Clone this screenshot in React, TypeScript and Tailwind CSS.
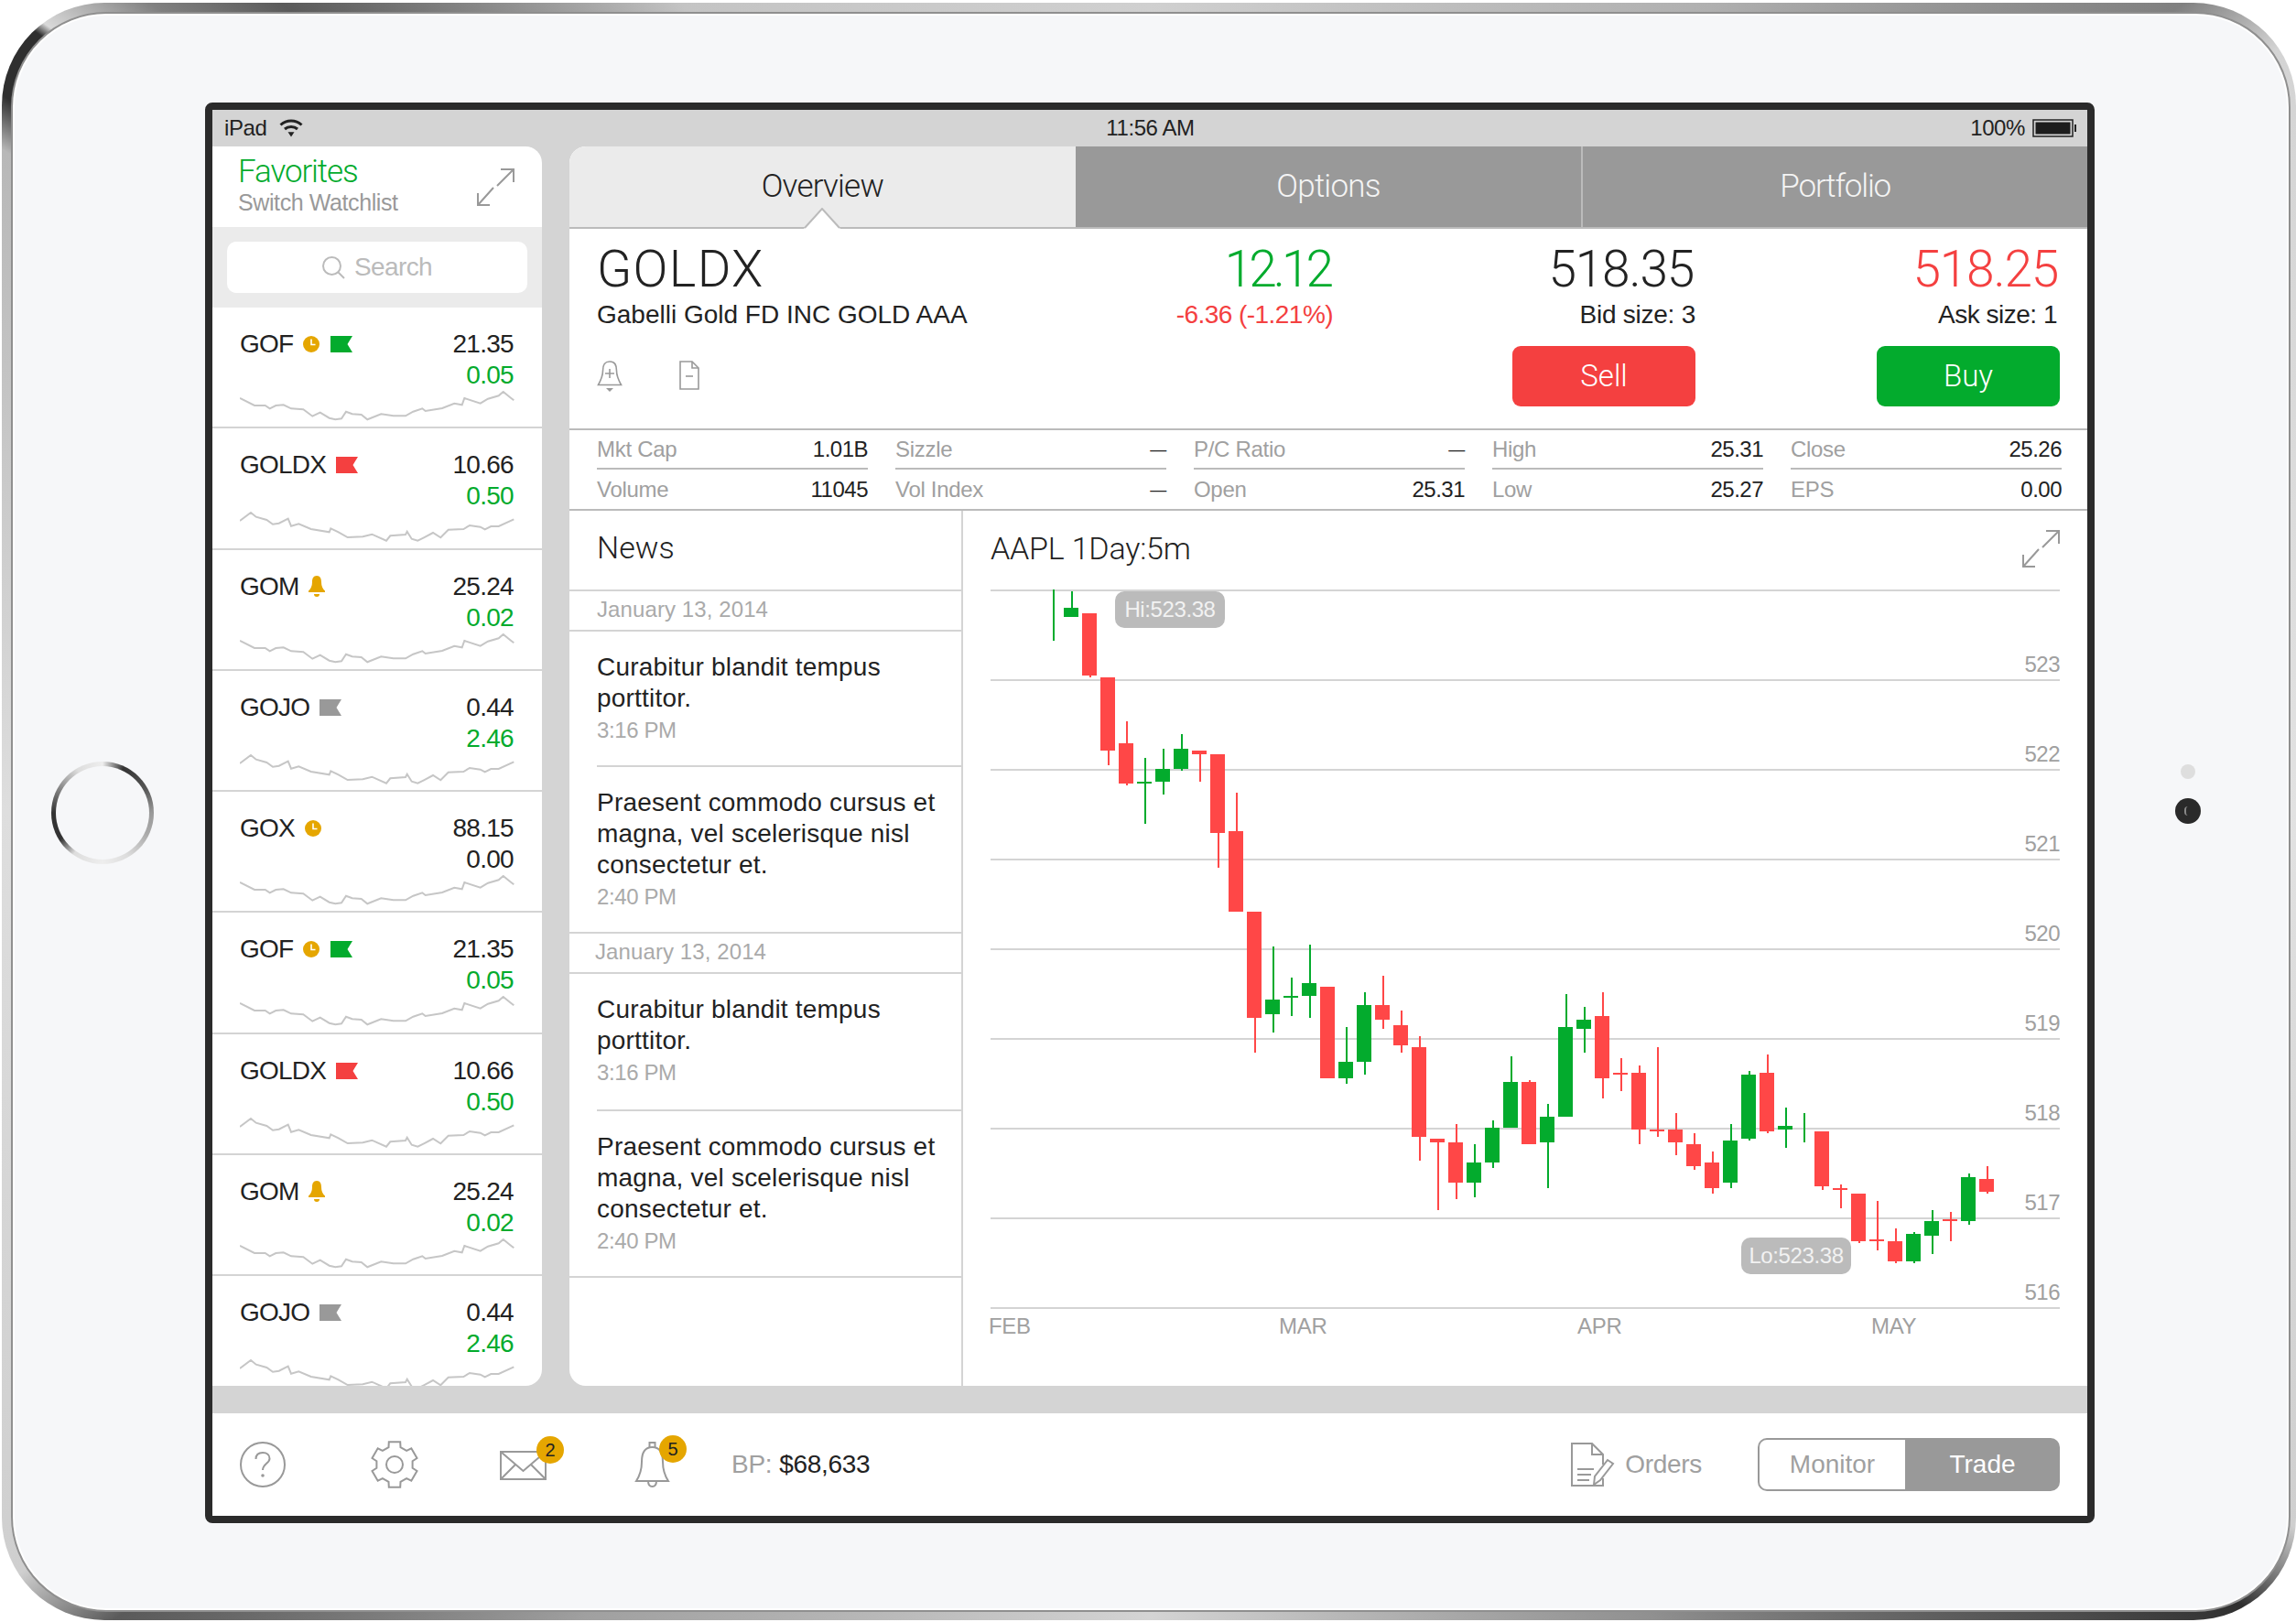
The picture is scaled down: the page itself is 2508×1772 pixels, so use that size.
import React from "react";

const GREEN = "#03ab2d";
const RED = "#f44040";
const AMBER = "#e5a600";

const sparkA: [number, number][] = [[97,713],[145,737],[180,737],[195,747],[215,737],[240,735],[265,747],[305,750],[335,772],[360,760],[390,778],[410,783],[430,780],[445,757],[465,765],[495,767],[515,783],[560,765],[600,771],[640,771],[665,757],[695,747],[705,755],[760,746],[800,730],[825,735],[833,713],[885,730],[910,715],[945,705],[960,692],[985,712],[995,720]];
const sparkB: [number, number][] = [[97,323],[133,296],[150,310],[185,320],[205,334],[225,331],[255,316],[265,340],[290,333],[330,350],[390,360],[395,348],[420,360],[450,377],[500,375],[530,367],[577,388],[590,372],[640,368],[645,358],[660,382],[680,388],[700,378],[730,362],[755,378],[780,352],[830,350],[850,338],[885,343],[900,351],[920,341],[945,341],[995,318]];

const toPts = (d: [number, number][], y0: number) =>
  d.map(([x, y]) => `${((x - 97) / 3).toFixed(1)},${((y - y0) / 3 + 1).toFixed(1)}`).join(" ");
const ptsA = toPts(sparkA, 692);
const ptsB = toPts(sparkB, 296);

type Row = { s: string; v: string; c: string; icons: string[]; spark: string; flat?: boolean };
const G: Row = { s: "GOF", v: "21.35", c: "0.05", icons: ["clock", "green"], spark: ptsA };
const L: Row = { s: "GOLDX", v: "10.66", c: "0.50", icons: ["red"], spark: ptsB };
const M: Row = { s: "GOM", v: "25.24", c: "0.02", icons: ["bell"], spark: ptsA };
const J: Row = { s: "GOJO", v: "0.44", c: "2.46", icons: ["gray"], spark: ptsB };
const X: Row = { s: "GOX", v: "88.15", c: "0.00", icons: ["clock"], spark: ptsA, flat: true };
const rows: Row[] = [G, L, M, J, X, G, L, M, J];

// [index, color (g/r), wickTop, wickBottom, bodyTop, bodyBottom]
const candles: [number, string, number, number, number, number][] = [
  [0,"g",643,699,0,0],[1,"g",645,663,663,673],[2,"r",669,739,669,737],[3,"r",739,835,739,819],
  [4,"r",787,857,811,855],[5,"g",827,899,853,855],[6,"g",817,867,839,853],[7,"g",801,841,817,839],
  [8,"r",819,853,819,823],[9,"r",823,947,823,909],[10,"r",865,995,907,995],[11,"r",995,1149,995,1111],
  [12,"g",1033,1127,1091,1107],[13,"g",1067,1109,1087,1089],[14,"g",1031,1111,1073,1087],[15,"r",1077,1177,1077,1177],
  [16,"g",1121,1183,1159,1177],[17,"g",1083,1173,1097,1159],[18,"r",1065,1123,1097,1113],[19,"r",1103,1149,1119,1141],
  [20,"r",1131,1267,1143,1241],[21,"r",1243,1321,1243,1247],[22,"r",1227,1309,1247,1291],[23,"g",1249,1307,1269,1291],
  [24,"g",1223,1275,1231,1269],[25,"g",1153,1231,1181,1231],[26,"r",1179,1249,1181,1249],[27,"g",1205,1297,1219,1247],
  [28,"g",1085,1219,1121,1219],[29,"g",1099,1149,1113,1123],[30,"r",1083,1199,1109,1177],[31,"r",1155,1191,1171,1173],
  [32,"r",1163,1249,1171,1233],[33,"r",1143,1241,1233,1235],[34,"r",1215,1261,1233,1247],[35,"r",1237,1277,1249,1273],
  [36,"r",1257,1303,1269,1297],[37,"g",1227,1297,1245,1291],[38,"g",1169,1245,1173,1243],[39,"r",1151,1237,1171,1235],
  [40,"g",1209,1253,1229,1233],[41,"g",1215,1247,0,0],[42,"r",1235,1299,1235,1295],[43,"r",1293,1319,1297,1299],
  [44,"r",1303,1357,1303,1355],[45,"r",1311,1365,1353,1355],[46,"r",1341,1379,1355,1377],[47,"g",1345,1379,1347,1377],
  [48,"g",1321,1369,1333,1349],[49,"r",1323,1355,1331,1333],[50,"g",1281,1337,1285,1333],[51,"r",1273,1303,1287,1301],
];

const gearPoints = () => {
  const cx = 26, cy = 26, ro = 25.5, ri = 20;
  const pts: string[] = [];
  const p = (r: number, a: number) => {
    const t = (a * Math.PI) / 180;
    return `${(cx + r * Math.cos(t)).toFixed(1)},${(cy + r * Math.sin(t)).toFixed(1)}`;
  };
  for (let i = 0; i < 6; i++) {
    const a = -90 + i * 60;
    pts.push(p(ri, a - 19), p(ro, a - 14), p(ro, a + 14), p(ri, a + 19));
  }
  return pts.join(" ");
};

function Flag({ fill }: { fill: string }) {
  return (
    <svg width="24" height="18" viewBox="0 0 24 18" className="shrink-0">
      <polygon points="0,0 24,0 18.5,9 24,18 0,18" fill={fill} />
    </svg>
  );
}
function Clock() {
  return (
    <svg width="18" height="18" viewBox="0 0 18 18" className="shrink-0">
      <circle cx="9" cy="9" r="9" fill={AMBER} />
      <path d="M9 3.5V9.5H13.5" fill="none" stroke="#fff" strokeWidth="1.6" />
    </svg>
  );
}
function MiniBell() {
  return (
    <svg width="18" height="23" viewBox="0 0 18 23" className="shrink-0">
      <path d="M9 0C5.2 0 4 3 4 7C4 11 2.5 14.5 0 16.5V18H18V16.5C15.5 14.5 14 11 14 7C14 3 12.8 0 9 0Z" fill={AMBER} />
      <path d="M6 20H12C12 22 11 23 9 23C7 23 6 22 6 20Z" fill={AMBER} />
    </svg>
  );
}
function Expand() {
  return (
    <svg width="41" height="41" viewBox="0 0 41 41" fill="none" stroke="#999" strokeWidth="2">
      <path d="M26 1H40V15M40 1L22 19" />
      <path d="M1 27V40H14M1 40L18 21" />
    </svg>
  );
}
function RowIcon({ k }: { k: string }) {
  if (k === "clock") return <Clock />;
  if (k === "bell") return <MiniBell />;
  if (k === "green") return <Flag fill={GREEN} />;
  if (k === "red") return <Flag fill={RED} />;
  return <Flag fill="#999" />;
}

function WatchRow({ r, last }: { r: Row; last: boolean }) {
  return (
    <div className={`h-[132.25px] shrink-0 pl-[30px] pr-[31px] pt-[23px] ${last ? "" : "border-b-2 border-[#d4d4d4]"}`}>
      <div className="flex items-center justify-between h-[34px]">
        <div className="flex items-center">
          <span className="text-[28px] leading-[34px] tracking-[-0.8px] text-[#222]">{r.s}</span>
          <span className="flex items-center gap-[12px] ml-[11px]">
            {r.icons.map((k, i) => (
              <RowIcon key={i} k={k} />
            ))}
          </span>
        </div>
        <span className="text-[28px] leading-[34px] tracking-[-0.7px] text-[#222]">{r.v}</span>
      </div>
      <div className={`text-right text-[28px] leading-[34px] tracking-[-0.7px] ${r.flat ? "text-[#222]" : "text-[#03ab2d]"}`}>{r.c}</div>
      <svg width="300" height="33" viewBox="0 0 300 33" fill="none" className="block">
        <polyline points={r.spark} stroke="#c6c6c6" strokeWidth="2" />
      </svg>
    </div>
  );
}

function Sidebar() {
  return (
    <aside className="w-[360px] shrink-0 bg-white rounded-r-[18px] flex flex-col overflow-hidden">
      <div className="h-[88px] shrink-0 pl-[28px] pr-[30px] flex items-center justify-between">
        <div className="-mt-[2px]">
          <div className="font-['Roboto',sans-serif] font-light text-[35px] leading-[38px] tracking-[-1.1px] text-[#03ab2d] -mt-[2px]">Favorites</div>
          <div className="text-[25px] leading-[28px] tracking-[-0.4px] text-[#999]">Switch Watchlist</div>
        </div>
        <Expand />
      </div>
      <div className="h-[88px] shrink-0 bg-[#ebebeb] px-[16px] flex items-center">
        <div className="w-full h-[56px] bg-white rounded-[10px] flex items-center justify-center gap-[10px]">
          <svg width="25" height="25" viewBox="0 0 25 25" fill="none" stroke="#bbb" strokeWidth="2">
            <circle cx="10.5" cy="10.5" r="9.5" />
            <path d="M17.5 17.5L24 24" />
          </svg>
          <span className="text-[28px] leading-[34px] tracking-[-0.6px] text-[#bbb]">Search</span>
        </div>
      </div>
      {rows.map((r, i) => (
        <WatchRow key={i} r={r} last={i === rows.length - 1} />
      ))}
    </aside>
  );
}

function Tabs() {
  return (
    <div className="grid grid-cols-3 h-[90px] shrink-0 border-b-2 border-[#bbb] font-['Roboto',sans-serif] font-light text-[35px] tracking-[-0.8px]">
      <div className="relative bg-[#ebebeb] text-[#222] flex items-center justify-center rounded-tl-[18px]">
        Overview
        <svg width="40" height="23" viewBox="0 0 40 23" className="absolute left-1/2 -translate-x-1/2 -bottom-[2px]">
          <polygon points="0,23 20,1 40,23" fill="#fff" />
          <path d="M1 22L20 1L39 22" fill="none" stroke="#bbb" strokeWidth="2" />
        </svg>
      </div>
      <div className="bg-[#999] text-[#f4f4f4] flex items-center justify-center">Options</div>
      <div className="bg-[#999] text-[#f4f4f4] flex items-center justify-center border-l-2 border-[#bbb] tracking-[-1.2px]">Portfolio</div>
    </div>
  );
}

function QuoteHeader() {
  return (
    <div className="h-[218px] shrink-0 pl-[30px] flex">
      <div className="w-[600px] pt-[14px]">
        <div className="font-['Roboto',sans-serif] font-light text-[56px] leading-[60px] tracking-[1.3px] text-[#222]">GOLDX</div>
        <div className="mt-[2px] text-[28px] leading-[36px] text-[#222] whitespace-nowrap">Gabelli Gold FD INC GOLD AAA</div>
        <div className="mt-[32px] flex gap-[62px]">
          <svg width="28" height="34" viewBox="0 0 28 34" fill="none" stroke="#999" strokeWidth="1.6">
            <path d="M14 1C8 1 6.5 5 6.5 11C6.5 17 4 22 1.5 26.5H26.5C24 22 21.5 17 21.5 11C21.5 5 20 1 14 1Z" />
            <path d="M14 9V19M9 14H19" />
            <path d="M10 30H18L14 34Z" fill="#999" stroke="none" />
          </svg>
          <svg width="22" height="32" viewBox="0 0 22 32" fill="none" stroke="#999" strokeWidth="1.6">
            <path d="M1 1H14L21 8V31H1Z" />
            <path d="M14 1V8H21" />
            <path d="M7 17H15" />
          </svg>
        </div>
      </div>
      <div className="w-[204px] pt-[14px] text-right">
        <div className="font-['Roboto',sans-serif] font-light text-[55px] leading-[60px] tracking-[-4px] text-[#03ab2d] pr-[3px]">12.12</div>
        <div className="mt-[2px] text-[28px] leading-[36px] tracking-[-0.55px] text-[#f44040] whitespace-nowrap">-6.36 (-1.21%)</div>
      </div>
      <div className="w-[396px] pt-[14px] flex flex-col items-end">
        <div className="font-['Roboto',sans-serif] font-light text-[55px] leading-[60px] tracking-[-1.2px] text-[#222] pr-[2px]">518.35</div>
        <div className="mt-[2px] text-[28px] leading-[36px] tracking-[-0.25px] text-[#222]">Bid size: 3</div>
        <div className="mt-[16px] w-[200px] h-[66px] rounded-[9px] bg-[#f44040] text-white flex items-center justify-center font-['Roboto',sans-serif] font-light text-[33px]">Sell</div>
      </div>
      <div className="w-[398px] pt-[14px] flex flex-col items-end">
        <div className="font-['Roboto',sans-serif] font-light text-[55px] leading-[60px] tracking-[-1.2px] text-[#f44040] pr-[2px]">518.25</div>
        <div className="mt-[2px] text-[28px] leading-[36px] tracking-[-0.5px] text-[#222] pr-[3px]">Ask size: 1</div>
        <div className="mt-[16px] w-[200px] h-[66px] rounded-[9px] bg-[#03ab2d] text-white flex items-center justify-center font-['Roboto',sans-serif] font-light text-[33px]">Buy</div>
      </div>
    </div>
  );
}

const stats = [
  [["Mkt Cap", "1.01B"], ["Volume", "11045"]],
  [["Sizzle", "—"], ["Vol Index", "—"]],
  [["P/C Ratio", "—"], ["Open", "25.31"]],
  [["High", "25.31"], ["Low", "25.27"]],
  [["Close", "25.26"], ["EPS", "0.00"]],
];

function Stats() {
  return (
    <div className="shrink-0 border-y-2 border-[#bbb] pl-[30px] pr-[28px] grid grid-cols-5 gap-x-[30px] h-[90px]">
      {stats.map((col, i) => (
        <div key={i} className="text-[24px] tracking-[-0.3px]">
          {col.map(([a, b], j) => (
            <div key={j} className={`h-[43px] flex items-center justify-between ${j === 0 ? "border-b-2 border-[#bbb]" : ""}`}>
              <span className="text-[#a0a0a0]">{a}</span>
              <span className={b === "—" ? "text-[#222] text-[18px] leading-none" : "text-[#222] tracking-[-0.5px]"}>{b}</span>
            </div>
          ))}
        </div>
      ))}
    </div>
  );
}

function NewsDate({ pad }: { pad: string }) {
  return (
    <div className={`h-[42px] flex items-center text-[24px] tracking-[0.1px] text-[#aaa] ${pad}`}>January 13, 2014</div>
  );
}
function NewsItem({ lines, time, h }: { lines: string[]; time: string; h: string }) {
  return (
    <div className={`${h} pt-[22px] text-[28px] leading-[34px] tracking-[0.2px] text-[#222]`}>
      {lines.map((l, i) => (
        <div key={i}>{l}</div>
      ))}
      <div className="text-[24px] leading-[36px] tracking-[-0.4px] text-[#aaa]">{time}</div>
    </div>
  );
}
function News() {
  const a = ["Curabitur blandit tempus", "porttitor."];
  const b = ["Praesent commodo cursus et", "magna, vel scelerisque nisl", "consectetur et."];
  return (
    <div className="w-[430px] shrink-0 border-r-2 border-[#d4d4d4] flex flex-col">
      <div className="h-[88px] shrink-0 border-b-2 border-[#d4d4d4] pl-[30px] pb-[6px] flex items-center font-['Roboto',sans-serif] font-light text-[34px] text-[#222]">News</div>
      <NewsDate pad="pl-[30px] pb-[2px]" />
      <div className="border-t-2 border-[#d4d4d4]">
        <div className="ml-[30px] border-b-2 border-[#d4d4d4]">
          <NewsItem lines={a} time="3:16 PM" h="h-[146px]" />
        </div>
        <div className="ml-[30px]">
          <NewsItem lines={b} time="2:40 PM" h="h-[180px]" />
        </div>
      </div>
      <div className="border-y-2 border-[#d4d4d4]">
        <NewsDate pad="pl-[28px] pb-[2px]" />
      </div>
      <div className="border-b-2 border-[#d4d4d4]">
        <div className="ml-[30px] border-b-2 border-[#d4d4d4]">
          <NewsItem lines={a} time="3:16 PM" h="h-[148px]" />
        </div>
        <div className="ml-[30px]">
          <NewsItem lines={b} time="2:40 PM" h="h-[180px]" />
        </div>
      </div>
    </div>
  );
}

const grid = [644, 742, 840, 938, 1036, 1134, 1232, 1330, 1428];
const yLabels = ["", "523", "522", "521", "520", "519", "518", "517", "516"];
const xLabels: [string, number][] = [["FEB", 1080], ["MAR", 1397], ["APR", 1723], ["MAY", 2044]];

function Chart() {
  return (
    <div className="flex-1 min-w-0 flex flex-col">
      <div className="h-[84px] shrink-0 pl-[30px] pr-[30px] pb-[2px] flex items-center justify-between">
        <span className="font-['Roboto',sans-serif] font-light text-[34px] tracking-[-0.2px] text-[#222]">AAPL 1Day:5m</span>
        <Expand />
      </div>
      <svg width="1228" height="872" viewBox="1052 641 1228 872" className="block text-[24px]">
        {grid.map((y) => (
          <rect key={y} x="1082" y={y - 1} width="1168" height="2" fill="#d4d4d4" />
        ))}
        {grid.map((y, i) =>
          yLabels[i] ? (
            <text key={y} x="2250" y={y - 9} textAnchor="end" fill="#a0a0a0" letterSpacing="-0.5">
              {yLabels[i]}
            </text>
          ) : null
        )}
        {xLabels.map(([t, x]) => (
          <text key={t} x={x} y="1456" fill="#a0a0a0" letterSpacing="-0.3">
            {t}
          </text>
        ))}
        {candles.map(([i, c, wt, wb, bt, bb]) => {
          const fill = c === "g" ? "#03ab2d" : "#ff4747";
          const left = 1142 + 20 * i;
          return (
            <g key={i} fill={fill}>
              <rect x={left + 8} y={wt} width="2" height={wb - wt} />
              {bb > bt ? <rect x={left} y={bt} width="16" height={bb - bt} /> : null}
            </g>
          );
        })}
        <rect x="1218" y="645" width="120" height="40" rx="10" fill="#bbb" />
        <text x="1278" y="673" textAnchor="middle" fill="#f2f2f2" letterSpacing="-0.4">Hi:523.38</text>
        <rect x="1902" y="1351" width="120" height="40" rx="10" fill="#bbb" />
        <text x="1962" y="1379" textAnchor="middle" fill="#f2f2f2" letterSpacing="-0.4">Lo:523.38</text>
      </svg>
    </div>
  );
}

function Badge({ n }: { n: string }) {
  return (
    <span className="absolute -top-[16px] -right-[19px] w-[30px] h-[30px] rounded-full bg-[#e5a600] text-[#222] text-[20px] leading-[30px] text-center">{n}</span>
  );
}

function BottomBar() {
  return (
    <div className="h-[112px] shrink-0 bg-white flex items-center pl-[30px] pr-[30px] text-[28px] tracking-[-0.3px]">
      <svg width="50" height="50" viewBox="0 0 50 50" fill="none" stroke="#999" strokeWidth="2" className="shrink-0">
        <circle cx="25" cy="25" r="24" />
        <path d="M17.5 19C17.5 14.5 20.5 12 25 12C29.5 12 32.5 14.8 32.5 18.5C32.5 23.5 25 24.5 25 31" />
        <circle cx="25" cy="37" r="1.8" fill="#999" stroke="none" />
      </svg>
      <svg width="52" height="52" viewBox="0 0 52 52" fill="none" stroke="#999" strokeWidth="2" className="shrink-0 ml-[93px]">
        <polygon points={gearPoints()} />
        <circle cx="26" cy="26" r="9" />
      </svg>
      <div className="relative shrink-0 ml-[89px] mt-[2px] w-[51px] h-[32px]">
        <svg width="51" height="32" viewBox="0 0 51 32" fill="none" stroke="#999" strokeWidth="2" className="block">
          <rect x="1" y="1" width="49" height="30" />
          <path d="M1 1L25.5 22L50 1" />
          <path d="M1 31L17 15M50 31L34 15" />
        </svg>
        <Badge n="2" />
      </div>
      <div className="relative shrink-0 ml-[96px] w-[39px] h-[50px]">
        <svg width="39" height="50" viewBox="0 0 39 50" fill="none" stroke="#999" strokeWidth="2" className="block">
          <path d="M16.5 7V1H22.5V7" />
          <path d="M19.5 6C11 6 8 13 8 22C8 31 6.5 36 2 43H37C32.5 36 31 31 31 22C31 13 28 6 19.5 6Z" />
          <path d="M15 43C15 47 17 49 19.5 49C22 49 24 47 24 43" />
        </svg>
        <span className="absolute -top-[7px] -right-[18px] w-[30px] h-[30px] rounded-full bg-[#e5a600] text-[#222] text-[20px] leading-[30px] text-center">5</span>
      </div>
      <span className="ml-[67px] text-[#a0a0a0]">BP:</span>
      <span className="ml-[8px] text-[#222]">$68,633</span>
      <div className="ml-auto flex items-center">
        <svg width="48" height="48" viewBox="0 0 48 48" fill="none" stroke="#999" strokeWidth="2" className="shrink-0">
          <path d="M35 24V13L23 1H1V47H35V39" />
          <path d="M23 1V13H35" />
          <path d="M7 29H25M7 35H22M7 41H20" />
          <path d="M25 46L26 37L40 19L46 23L32 41Z" />
        </svg>
        <span className="ml-[11px] text-[#a0a0a0]">Orders</span>
        <div className="ml-[61px] w-[330px] h-[58px] flex tracking-normal">
          <div className="w-[161px] border-2 border-r-0 border-[#999] rounded-l-[10px] bg-white text-[#a0a0a0] flex items-center justify-center">Monitor</div>
          <div className="flex-1 bg-[#999] rounded-r-[10px] text-white flex items-center justify-center">Trade</div>
        </div>
      </div>
    </div>
  );
}

function Screen() {
  return (
    <div className="w-[2064px] h-[1552px] shrink-0 border-[8px] border-[#2b2b2b] rounded-[8px] bg-[#d4d4d4] flex flex-col overflow-hidden">
      <div className="h-[40px] shrink-0 pl-[13px] pr-[12px] flex items-center justify-between text-[24px] tracking-[-0.4px] text-[#222]">
        <div className="w-[400px] flex items-center gap-[14px]">
          <span>iPad</span>
          <svg width="26" height="20" viewBox="0 0 26 20" fill="none" stroke="#222" strokeWidth="3">
            <path d="M1.5 6.5C8 0.5 18 0.5 24.5 6.5" />
            <path d="M6 11C10 7.5 16 7.5 20 11" />
            <path d="M9.5 14.2H16.5L13 19.5Z" fill="#222" stroke="none" />
          </svg>
        </div>
        <span>11:56 AM</span>
        <div className="w-[400px] flex items-center justify-end gap-[8px]">
          <span>100%</span>
          <svg width="48" height="20" viewBox="0 0 48 20">
            <rect x="1" y="1" width="43" height="18" fill="none" stroke="#222" strokeWidth="1.5" />
            <rect x="3.5" y="3.5" width="38" height="13" fill="#1d1d1d" />
            <rect x="46" y="6" width="2" height="8" fill="#222" />
          </svg>
        </div>
      </div>
      <div className="flex-1 min-h-0 flex gap-[30px]">
        <Sidebar />
        <main className="flex-1 min-w-0 bg-white rounded-l-[18px] overflow-hidden flex flex-col">
          <Tabs />
          <QuoteHeader />
          <Stats />
          <div className="flex-1 min-h-0 flex">
            <News />
            <Chart />
          </div>
        </main>
      </div>
      <div className="h-[30px] shrink-0" />
      <BottomBar />
    </div>
  );
}

export default function App() {
  return (
    <div className="w-[2508px] h-[1772px] bg-white pl-[2px] pt-[3px] pb-[2px] overflow-hidden font-['Liberation_Sans',sans-serif]">
      <div className="w-full h-full rounded-[112px] pl-[10px] pr-[6px] pt-[10px] pb-[9px] bg-[conic-gradient(#d0d0d0_0deg,#b0b0b0_35deg,#808080_52deg,#d4d4d4_56deg,#e2e2e2_90deg,#cfcfcf_122deg,#2f2f2f_126deg,#4c4c4c_131deg,#909090_148deg,#d4d4d4_180deg,#a0a0a0_215deg,#5a5a5a_232deg,#cfcfcf_236deg,#dedede_270deg,#b8b8b8_300deg,#2f2f2f_302deg,#2f2f2f_305deg,#d9d9d9_305.5deg,#808080_309deg,#5a5a5a_313deg,#c4c4c4_330deg,#d0d0d0_360deg)]">
        <div className="w-full h-full rounded-[104px] p-[2px] bg-[#8f8f8f]">
          <div className="w-full h-full rounded-[102px] border-2 border-white bg-[#f6f7f9] flex items-center pt-[2px] overflow-hidden">
            <div className="w-[208px] shrink-0 flex justify-center pr-[17px]">
              <div className="w-[112px] h-[112px] rounded-full p-[5px] bg-[conic-gradient(#eee_0deg,#333_25deg,#555_60deg,#999_90deg,#aaa_115deg,#ddd_150deg,#eee_180deg,#ddd_215deg,#333_238deg,#333_270deg,#888_300deg,#ddd_330deg,#eee_360deg)]">
                <div className="w-full h-full rounded-full bg-[#f6f7f9]" />
              </div>
            </div>
            <Screen />
            <div className="flex-1 flex flex-col items-center pr-[6px] pb-[41px] gap-[21px]">
              <div className="w-[16px] h-[16px] rounded-full bg-[#dedede]" />
              <div className="w-[28px] h-[28px] rounded-full bg-[#2a2a2a] flex items-center justify-center">
                <div className="w-[8px] h-[10px] rounded-full border-l-2 border-[#888]" />
              </div>
            </div>
          </div>
        </div>
      </div>
    </div>
  );
}
